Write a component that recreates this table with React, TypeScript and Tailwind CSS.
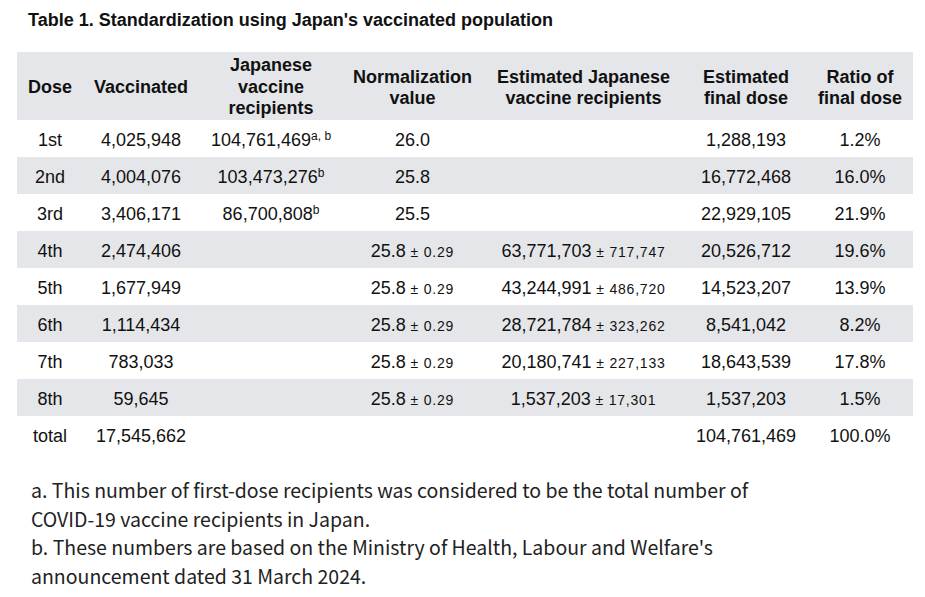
const rows: {
  dose: string;
  vaccinated: string;
  recipients?: string;
  sup?: string;
  norm: string;
  normErr?: string;
  est?: string;
  estErr?: string;
  final: string;
  ratio: string;
}[] = [
  { dose: "1st", vaccinated: "4,025,948", recipients: "104,761,469", sup: "a, b", norm: "26.0", final: "1,288,193", ratio: "1.2%" },
  { dose: "2nd", vaccinated: "4,004,076", recipients: "103,473,276", sup: "b", norm: "25.8", final: "16,772,468", ratio: "16.0%" },
  { dose: "3rd", vaccinated: "3,406,171", recipients: "86,700,808", sup: "b", norm: "25.5", final: "22,929,105", ratio: "21.9%" },
  { dose: "4th", vaccinated: "2,474,406", norm: "25.8", normErr: "0.29", est: "63,771,703", estErr: "717,747", final: "20,526,712", ratio: "19.6%" },
  { dose: "5th", vaccinated: "1,677,949", norm: "25.8", normErr: "0.29", est: "43,244,991", estErr: "486,720", final: "14,523,207", ratio: "13.9%" },
  { dose: "6th", vaccinated: "1,114,434", norm: "25.8", normErr: "0.29", est: "28,721,784", estErr: "323,262", final: "8,541,042", ratio: "8.2%" },
  { dose: "7th", vaccinated: "783,033", norm: "25.8", normErr: "0.29", est: "20,180,741", estErr: "227,133", final: "18,643,539", ratio: "17.8%" },
  { dose: "8th", vaccinated: "59,645", norm: "25.8", normErr: "0.29", est: "1,537,203", estErr: "17,301", final: "1,537,203", ratio: "1.5%" },
  { dose: "total", vaccinated: "17,545,662", norm: "", final: "104,761,469", ratio: "100.0%" },
];

// smaller "± n" suffix, slightly tracked like the source
function Err({ value }: { value: string }) {
  return <span className="text-[14px] tracking-[0.8px]"> ± {value}</span>;
}

export default function App() {
  return (
    <div className="min-h-screen bg-white pt-[9px] text-[#111] [font-family:'Liberation_Sans',Arial,sans-serif]">
      <h1 className="pl-[28px] text-[18px] font-bold leading-[22px]">
        Table 1. Standardization using Japan's vaccinated population
      </h1>

      <table className="mt-[21px] ml-[17px] w-[896px] table-fixed border-collapse text-center text-[18px]">
        <colgroup>
          <col className="w-[66px]" />
          <col className="w-[116px]" />
          <col className="w-[144px]" />
          <col className="w-[139px]" />
          <col className="w-[203px]" />
          <col className="w-[122px]" />
          <col className="w-[106px]" />
        </colgroup>
        <thead>
          <tr className="h-[68px] bg-[#e5e6e9] font-bold leading-[21.5px]">
            <th className="pt-[4px]">Dose</th>
            <th className="pt-[4px]">Vaccinated</th>
            <th className="pt-[3px]">
              Japanese
              <br />
              vaccine
              <br />
              recipients
            </th>
            <th className="pt-[4px]">
              Normalization
              <br />
              value
            </th>
            <th className="pt-[4px]">
              Estimated Japanese
              <br />
              vaccine recipients
            </th>
            <th className="pt-[4px]">
              Estimated
              <br />
              final dose
            </th>
            <th className="pt-[4px]">
              Ratio of
              <br />
              final dose
            </th>
          </tr>
        </thead>
        <tbody>
          {rows.map((r, i) => (
            <tr key={r.dose} className={i % 2 === 1 ? "h-[37px] bg-[#e5e6e9]" : "h-[37px]"}>
              <td className="pt-[3px]">{r.dose}</td>
              <td className="pt-[3px]">{r.vaccinated}</td>
              <td className="pt-[3px]">
                {r.recipients}
                {r.sup && <sup className="text-[12px]">{r.sup}</sup>}
              </td>
              <td className="pt-[3px]">
                {r.norm}
                {r.normErr && <Err value={r.normErr} />}
              </td>
              <td className="pt-[3px]">
                {r.est}
                {r.estErr && <Err value={r.estErr} />}
              </td>
              <td className="pt-[3px]">{r.final}</td>
              <td className="pt-[3px]">{r.ratio}</td>
            </tr>
          ))}
        </tbody>
      </table>

      <div className="mt-[23px] pl-[31px] text-[19.5px] leading-[28.5px] text-[#222] [font-family:'Noto_Sans_CJK_JP',sans-serif]">
        <p>
          a. This number of first-dose recipients was considered to be the total number of
          <br />
          COVID-19 vaccine recipients in Japan.
        </p>
        <p>
          b. These numbers are based on the Ministry of Health, Labour and Welfare's
          <br />
          announcement dated 31 March 2024.
        </p>
      </div>
    </div>
  );
}
